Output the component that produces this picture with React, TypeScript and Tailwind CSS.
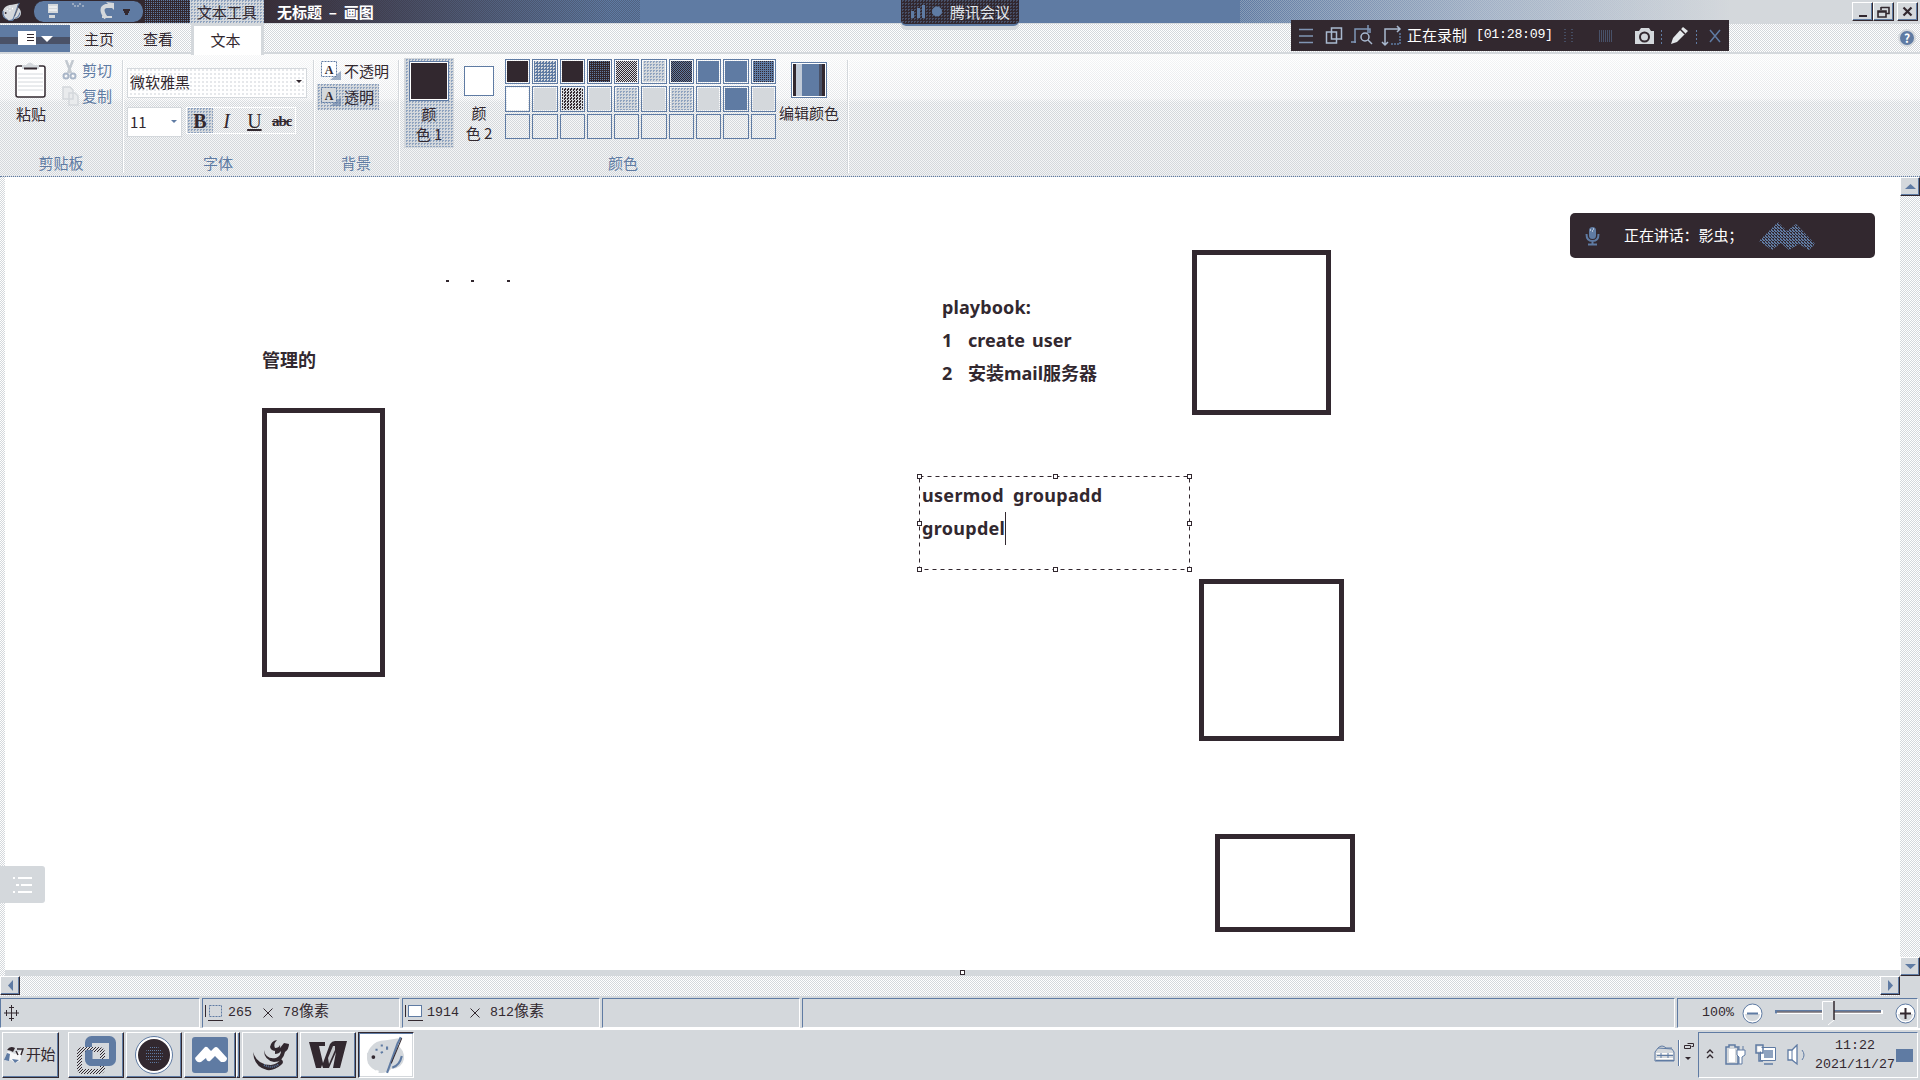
import React from "react";

const UI = "font-['Noto_Sans_CJK_SC','Noto_Sans',sans-serif]";
const MONO = "font-['Liberation_Mono','Noto_Sans_CJK_SC',monospace]";

/* one-pixel dither fills */
const GRAY_HALF = "bg-[repeating-conic-gradient(#ffffff_0_25%,#d4d8dc_0_50%)] bg-[length:2px_2px]";
const GRAY_LIGHT = "bg-[conic-gradient(#e6e8eb_0_25%,#ffffff_0)] bg-[length:4px_4px]";
const GRAY_BLUE = "bg-[conic-gradient(#8fa3bf_0_25%,#d4d8dc_0)] bg-[length:3px_3px]";
const DARK_DOTS = "bg-[conic-gradient(#5f7ba3_0_25%,#32282f_0)] bg-[length:2px_2px]";
const DARK_HALF = "bg-[repeating-conic-gradient(#5f7ba3_0_25%,#32282f_0_50%)] bg-[length:2px_2px]";
const BLUE_DARK = "bg-[conic-gradient(#32282f_0_25%,#5f7ba3_0)] bg-[length:2px_2px]";
const BLUE_GRAY = "bg-[conic-gradient(#d4d8dc_0_25%,#5f7ba3_0)] bg-[length:3px_3px]";

const RAISED = "border border-t-white border-l-white border-r-[#32282f] border-b-[#32282f] bg-[#d4d8dc] shadow-[inset_-1px_-1px_0_#5f7ba3]";

function Palette({ w, h, light = false }: { w: number; h: number; light?: boolean }) {
  return (
    <svg width={w} height={h} viewBox="0 0 38 38">
      <path d="M4 12 Q9 5 19 5 L31 3 L29 9 Q37 14 36 23 Q34 32 24 32 Q20 37 12 34 Q1 31 1 22 Q1 16 4 12Z" fill="#d4d8dc" />
      <path d="M2 17 Q1 29 10 33 M12 35 Q19 36 22 32" stroke={light ? "#d4d8dc" : "#5f7ba3"} strokeWidth="2" fill="none" />
      <path d="M9 14h2M14 10h2M14 17l2-1M20 11v3" stroke={light ? "#5f7ba3" : "#ffffff"} strokeWidth="2" />
      <circle cx="7" cy="21" r="1.8" fill="#32282f" />
      <path d="M33 2 L30 8 L20 36" stroke="#5f7ba3" strokeWidth="2" fill="none" />
      <path d="M34 3 L24 27" stroke="#32282f" strokeWidth="1" />
      <path d="M25 31 Q32 29 34 20" stroke="#5f7ba3" strokeWidth="2" fill="none" />
    </svg>
  );
}

function TitleBar() {
  return (
    <div className="flex h-[23px] w-full shrink-0">
      <div className="flex w-[33px] items-center bg-[#32282f] pl-px"><Palette w={22} h={20} /></div>
      <div className="flex w-[111px] items-center bg-[#32282f]">
        <div className="h-[21px] w-[111px] rounded-[10px] border-x border-[#32282f] bg-[#5f7ba3]">
          <svg width="109" height="21" viewBox="1 1 109 21">
            <path d="M15 4h10v9h-10zM16 15h6v3h-6z" fill="#d4d8dc" />
            <path d="M16 7h8M16 10h8" stroke="#fff" />
            <path d="M39 4h2M41 6h2M44 6h2M46 4h2M49 6h2" stroke="#d4d8dc" />
            <path d="M73 18q-7-10 0-12h6" stroke="#d4d8dc" strokeWidth="4" fill="none" />
            <path d="M73 2l8 8V3zM69 16h10v2H69z" fill="#d4d8dc" />
            <path d="M90 10h7M91 12h5M92 14h3" stroke="#32282f" strokeWidth="2" />
          </svg>
        </div>
      </div>
      <div className={"w-[46px] " + DARK_DOTS} />
      <div className={"relative flex h-6 w-[74px] items-center justify-center " + GRAY_BLUE}>
        <span className="text-[15px] leading-6 text-[#32282f]">文本工具</span>
      </div>
      <div className="flex w-[376px] items-center whitespace-pre bg-[repeating-conic-gradient(rgba(50,40,47,.3)_0_25%,transparent_0_50%),linear-gradient(90deg,#392f3a,#5f7ba3_92%)] bg-[length:2px_2px,100%_100%] pl-[13px] text-[15px] font-bold leading-[22px] text-white">无标题  –  画图</div>
      <div className="w-[600px] bg-[#5f7ba3]" />
      <div className="w-[490px] bg-[repeating-conic-gradient(rgba(212,216,220,.35)_0_25%,transparent_0_50%),linear-gradient(90deg,#5f7ba3,#a0b0c6_50%,#d4d8dc)] bg-[length:2px_2px,100%_100%]" />
      <div className="flex flex-1 items-center justify-end bg-[#d4d8dc] pr-[2px]">
        <div className={"flex h-[19px] w-[21px] items-end justify-center pb-[3px] " + RAISED}><div className="h-[2px] w-2 bg-[#32282f]" /></div>
        <div className={"flex h-[19px] w-[21px] items-center justify-center " + RAISED}>
          <svg width="13" height="12"><path d="M4 1.5h8v6h-3M4 1v3M1 5h8v6h-8zM1 6h8" fill="none" stroke="#32282f" strokeWidth="1.6" /></svg>
        </div>
        <div className={"ml-[3px] flex h-[19px] w-[21px] items-center justify-center " + RAISED}>
          <svg width="11" height="11"><path d="M1.500 1.500l8 8M9.500 1.500l-8 8" stroke="#32282f" strokeWidth="2.200" /></svg>
        </div>
      </div>
    </div>
  );
}

function TabRow() {
  return (
    <div className={"flex h-[31px] w-full shrink-0 border-b-2 border-t border-[#d4d8dc] text-[15px] leading-[30px] text-[#32282f] " + GRAY_HALF}>
      <div className="mt-px flex h-[27px] w-[70px] items-center bg-[linear-gradient(#5f7ba3_45%,#4a5268_45%,#4a5268_70%,#5f7ba3_70%)] pl-[18px]">
        <svg width="36" height="16"><path d="M0 0h18v14H0z" fill="#fff" /><path d="M9 3.500h7M9 6.500h7M9 9.500h7" stroke="#32282f" /><path d="M23 5h12l-6 6z" fill="#fff" /></svg>
      </div>
      <div className="w-[58px] text-center">主页</div>
      <div className="w-[60px] text-center">查看</div>
      <div className="relative z-10 -mb-[3px] ml-[3px] w-[73px] border-x-[3px] border-t-2 border-[#d4d8dc] bg-white text-center leading-[27px]"><span className="-ml-[4px]">文本</span></div>
      <div className="flex flex-1 items-center justify-end pr-[4px]">
        <div className="flex h-[18px] w-[18px] items-center justify-center rounded-full border-2 border-[#d4d8dc] bg-[#5f7ba3] text-[12px] font-bold text-white">?</div>
      </div>
    </div>
  );
}

function Group({ w, label, children }: { w: string; label: string; children: React.ReactNode }) {
  return (
    <div className={"flex h-[113px] flex-col justify-between border-r border-[#d4d8dc] shadow-[1px_0_0_#fff] " + w}>
      <div className="flex h-[92px]">{children}</div>
      <div className="pb-px text-center text-[15px] leading-[18px] text-[#5f7ba3]">{label}</div>
    </div>
  );
}

function TextBg({ label, active = false }: { label: string; active?: boolean }) {
  return (
    <div className={"flex h-[26px] items-center pl-1 " + (active ? "w-[62px] " + GRAY_BLUE : "w-[76px]")}>
      <svg width="20" height="20" className="mr-[3px] shrink-0">
        <path d="M9 19h11v-9z" fill="#5f7ba3" opacity=".6" />
        <rect x=".5" y=".5" width="15" height="15" fill={active ? "#d4d8dc" : "#fff"} stroke="#5f7ba3" strokeDasharray="2 1" />
        <text x="8" y="12.500" fontSize="12" fontFamily="Liberation Serif" fontWeight="bold" textAnchor="middle" fill="#32282f">A</text>
      </svg>
      <span className="whitespace-nowrap">{label}</span>
    </div>
  );
}

const SWATCHES = [
  "bg-[#32282f]", BLUE_GRAY, "bg-[#32282f]", DARK_DOTS, "bg-[repeating-conic-gradient(#d4d8dc_0_25%,#32282f_0_50%)] bg-[length:2px_2px]",
  GRAY_BLUE, DARK_HALF, "bg-[#5f7ba3]", "bg-[#5f7ba3]", BLUE_DARK,
  "bg-white", "bg-[#d4d8dc]", "bg-[repeating-conic-gradient(#d4d8dc_0_25%,#32282f_0_50%)] bg-[length:3px_3px]", "bg-[#d4d8dc]", GRAY_BLUE,
  "bg-[#d4d8dc]", GRAY_BLUE, "bg-[#d4d8dc]", "bg-[#5f7ba3]", "bg-[#d4d8dc]",
];

function Ribbon() {
  return (
    <div className={"flex h-[123px] w-full shrink-0 flex-col border-b border-dotted border-[#5f7ba3] " + GRAY_HALF}>
      <div className="h-[122px] bg-[linear-gradient(rgba(255,255,255,.75),rgba(255,255,255,.4)_36%,rgba(212,216,220,.15)_40%,rgba(212,216,220,.3))]">
        <div className="flex pt-[6px] text-[15px] leading-[20px] text-[#32282f]">
          <Group w="w-[123px]" label="剪贴板">
            <div className="flex w-[62px] flex-col items-center pt-[1px]">
              <svg width="32" height="38">
                <rect x="1" y="5" width="29" height="31" rx="2" fill="#fff" stroke="#32282f" strokeWidth="1.500" />
                <path d="M3 13h25M3 17h25M3 21h25M3 25h25M3 29h25" stroke="#d4d8dc" />
                <path d="M7 4h4q4-5 8 0h5v4h-17z" fill="#d4d8dc" /><path d="M9 7.500h13" stroke="#32282f" strokeWidth="2" />
              </svg>
              <span className="mt-[5px]">粘贴</span>
            </div>
            <div className="flex flex-col gap-[6px] text-[#5f7ba3]">
              <div className="flex items-center gap-[5px]">
                <svg width="15" height="20"><path d="M4 0l5 13M11 0L6 13" stroke="#c3c9d0" strokeWidth="2.500" /><circle cx="4" cy="16" r="2.500" fill="none" stroke="#a9b6c8" strokeWidth="2" /><circle cx="11" cy="16" r="2.500" fill="none" stroke="#a9b6c8" strokeWidth="2" /></svg>
                剪切
              </div>
              <div className="flex items-center gap-[3px]">
                <svg width="17" height="20"><path d="M1 1h7l3 3v9H1zM7 7h6l3 3v9H7z" fill="#e9ebed" stroke="#d4d8dc" strokeWidth="1.500" /></svg>
                复制
              </div>
            </div>
          </Group>
          <Group w="w-[191px]" label="字体">
            <div className="flex flex-col pl-[4px] pt-[8px]">
              <div className={"flex h-[30px] w-[180px] items-center justify-between border border-[#d4d8dc] pb-[3px] pl-[2px] pr-[4px] " + GRAY_LIGHT}>
                微软雅黑<svg width="6" height="4"><path d="M0 0h6l-3 3z" fill="#32282f" /></svg>
              </div>
              <div className="mt-[9px] flex items-start">
                <div className="flex h-[30px] w-[55px] items-center justify-between border border-[#d4d8dc] bg-white pb-px pl-[2px] pr-[4px]">
                  11<svg width="6" height="4"><path d="M0 0h6l-3 3z" fill="#5f7ba3" /></svg>
                </div>
                <div className="ml-[4px] flex h-[27px] w-[110px] border border-white font-['Liberation_Serif',serif] text-[20px] leading-[26px]">
                  <div className={"w-[26px] text-center font-bold " + GRAY_BLUE}>B</div>
                  <div className="w-[28px] text-center italic">I</div>
                  <div className="w-[28px] text-center underline">U</div>
                  <div className="w-[27px] text-center text-[15px] font-bold tracking-[-1px] line-through">abc</div>
                </div>
              </div>
            </div>
          </Group>
          <Group w="w-[85px]" label="背景">
            <div className="-mt-[2px] flex flex-col pl-[3px]">
              <TextBg label="不透明" />
              <TextBg label="透明" active />
            </div>
          </Group>
          <Group w="w-[449px]" label="颜色">
            <div className={"-mt-[2px] ml-[5px] flex h-[90px] w-[50px] shrink-0 flex-col items-center border border-[#d4d8dc] pt-[3px] text-center " + GRAY_BLUE}>
              <div className="h-[38px] w-[38px] shrink-0 border border-white bg-[#32282f] outline outline-[#5f7ba3]" />
              <span className="mt-[4px] whitespace-pre leading-[20px]">颜{"\n"}色 1</span>
            </div>
            <div className="flex w-[50px] shrink-0 flex-col items-center pt-[6px]">
              <div className="h-[30px] w-[30px] shrink-0 border border-[#5f7ba3] bg-white" />
              <span className="mt-[7px] whitespace-pre text-center leading-[20px]">颜{"\n"}色 2</span>
            </div>
            <div className="-mt-px ml-px grid h-[80px] w-[271px] shrink-0 grid-cols-10 grid-rows-3 gap-[2px]">
              {Array.from({ length: 30 }, (_, i) => (
                <div key={i} className="border border-[#5f7ba3] p-px">
                  <div className={"h-full w-full " + (SWATCHES[i] ?? "")} />
                </div>
              ))}
            </div>
            <div className="flex w-[66px] shrink-0 flex-col items-center pt-[2px]">
              <svg width="37" height="37">
                <rect x=".5" y=".5" width="35" height="35" fill="#fff" stroke="#5f7ba3" />
                <path d="M2 2h3v32h-3zM31 2h3v32h-3z" fill="#32282f" /><path d="M28 2h3v32h-3z" fill="#4a5268" />
                <path d="M5 2h7v32h-7z" fill="#c0cad8" /><path d="M11 2h17v32h-17z" fill="#5f7ba3" />
              </svg>
              <span className="mt-[4px] whitespace-nowrap">编辑颜色</span>
            </div>
          </Group>
        </div>
      </div>
    </div>
  );
}

const BOXES = [
  "left-[257px] top-[231px] w-[123px] h-[269px]",
  "left-[1187px] top-[73px] w-[139px] h-[165px]",
  "left-[1194px] top-[402px] w-[145px] h-[162px]",
  "left-[1210px] top-[657px] w-[140px] h-[98px]",
];

const HANDLES = [
  "left-[-2px] top-[-2px]", "left-[134px] top-[-2px]", "left-[268px] top-[-2px]",
  "left-[-2px] top-[45px]", "left-[268px] top-[45px]",
  "left-[-2px] top-[91px]", "left-[134px] top-[91px]", "left-[268px] top-[91px]",
];

function Canvas() {
  return (
    <div className="relative h-[793px] w-[1895px] bg-white font-['Noto_Sans','Noto_Sans_CJK_SC',sans-serif] text-[18px] font-bold leading-[33px] text-[#32282f]">
      {BOXES.map((b) => <div key={b} className={"absolute border-[5px] border-[#32282f] " + b} />)}
      <div className="absolute left-[441px] top-[103px] h-[2px] w-[3px] bg-[#32282f]" />
      <div className="absolute left-[466px] top-[103px] h-[2px] w-[3px] bg-[#32282f]" />
      <div className="absolute left-[502px] top-[103px] h-[2px] w-[3px] bg-[#32282f]" />
      <div className="absolute left-[257px] top-[167px] whitespace-nowrap">管理的</div>
      <div className="absolute left-[937px] top-[114px] whitespace-pre">
        <div className="tracking-[0.1px]">playbook:</div>
        <div className="flex"><span className="w-[26px]">1</span><span className="w-[64px]">create</span><span>user</span></div>
        <div className="flex"><span className="w-[26px]">2</span><span>安装mail服务器</span></div>
      </div>
      <div className="absolute left-[914px] top-[299px] h-[94px] w-[271px]">
        <svg className="absolute inset-0" width="271" height="94"><rect x=".5" y=".5" width="270" height="93" fill="none" stroke="#32282f" strokeDasharray="4 4" /></svg>
        <div className="absolute left-[3px] top-[3px] flex whitespace-pre tracking-[0.3px]"><span className="w-[91px]">usermod</span><span>groupadd</span></div>
        <div className="absolute left-[3px] top-[36px] tracking-[0.3px]">groupdel</div>
        <div className="absolute left-[86px] top-[36px] h-[33px] w-px bg-[#32282f]" />
        {HANDLES.map((h) => <div key={h} className={"absolute h-[5px] w-[5px] border border-[#32282f] bg-white " + h} />)}
      </div>
      <div className="absolute left-[-5px] top-[689px] flex h-[37px] w-[45px] items-center rounded-r-[3px] bg-[#d4d8dc] pl-[13px]">
        <svg width="20" height="18"><path d="M0 2h2M5 2h14M3 9h3M8 9h11M0 16h2M5 16h14" stroke="#fff" strokeWidth="2" /></svg>
      </div>
      <div className={"absolute left-[1565px] top-[36px] flex h-[45px] w-[305px] items-center rounded-[5px] bg-[#32282f] font-normal text-white " + UI}>
        <svg className="ml-[15px]" width="15" height="20"><rect x="4" y="1" width="7" height="12" rx="3.500" fill="#5f7ba3" /><path d="M1.500 8q0 7 6 7t6-7M7.500 15v3M3 18.500h9" fill="none" stroke="#5f7ba3" strokeWidth="2" /><path d="M5 4h1M8 3h1M7 5h1" stroke="#fff" /></svg>
        <span className="-mt-[2px] ml-[24px] w-[135px] whitespace-pre text-[15px] tracking-[-0.1px]">正在讲话：影虫；</span>
        <svg width="58" height="30">
          <defs><pattern id="dots" width="3" height="3" patternUnits="userSpaceOnUse"><path d="M0 0h2v1h-2zM1 1h2v1h-2zM0 2h1v1h-1z" fill="#5f7ba3" /></pattern></defs>
          <path d="M0 20L19 1l9 9 9-7 19 20-6 6-10-6-10 6-8-7-9 7z" fill="url(#dots)" />
        </svg>
      </div>
      <div className="absolute left-[955px] top-[793px] h-[5px] w-[5px] border border-[#32282f] bg-white" />
    </div>
  );
}

function ScrollButton({ d, size = "h-[19px] w-[20px]" }: { d: string; size?: string }) {
  return (
    <div className={"flex shrink-0 items-center justify-center " + size + " " + RAISED}>
      <svg width="11" height="11"><path d={d} fill="#5f7ba3" /></svg>
    </div>
  );
}

function Pane({ w, children }: { w: string; children?: React.ReactNode }) {
  return <div className={"flex h-[30px] shrink-0 items-center border border-t-[#5f7ba3] border-l-[#5f7ba3] border-b-white border-r-white whitespace-pre " + w}>{children}</div>;
}

function StatusBar() {
  return (
    <div className={"flex h-[32px] w-full shrink-0 gap-[2px] bg-[#d4d8dc] pt-[2px] text-[13.3px] text-[#32282f] " + MONO}>
      <Pane w="w-[200px]"><svg className="ml-[2px]" width="17" height="18"><path d="M8.500 1v16M1 9h15M6 3.500h5M6 14.500h5M3.500 6v6M13.500 6v6" stroke="#32282f" fill="none" /></svg></Pane>
      <Pane w="w-[198px]">
        <svg className="ml-[1px]" width="20" height="18"><path d="M1.500 1v12M4 16.500h15" stroke="#32282f" /><rect x="5.500" y="1.500" width="12" height="11" fill="none" stroke="#5f7ba3" strokeDasharray="2 1" /></svg>
        <span className="ml-[4px] w-[34px]">265</span><Times /><span className="ml-[9px]">78<span className="text-[15px]">像素</span></span>
      </Pane>
      <Pane w="w-[198px]">
        <svg className="ml-[1px]" width="20" height="18"><path d="M1.500 1v12M4 16.500h15" stroke="#32282f" /><rect x="4.500" y="1.500" width="13" height="11" fill="#fff" stroke="#5f7ba3" /></svg>
        <span className="ml-[3px] w-[42px]">1914</span><Times /><span className="ml-[9px]">812<span className="text-[15px]">像素</span></span>
      </Pane>
      <Pane w="w-[198px]" />
      <Pane w="w-[873px]" />
      <Pane w="w-[241px]">
        <span className="ml-[24px] w-[31px]">100%</span>
        <Round plus={false} />
        <svg className="ml-[12px] mr-[12px]" width="108" height="26">
          <path d="M0 10h108v4H0z" fill="#fff" /><path d="M0 10h106v1.500H2v2H0z" fill="#5f7ba3" /><path d="M2 12h104" stroke="#32282f" />
          <path d="M47 1h12v19l-6 5-6-5z" fill="#d4d8dc" /><path d="M47.500 20V1.500h11" stroke="#fff" fill="none" /><path d="M59 1v19" stroke="#32282f" fill="none" strokeWidth="1.500" /><path d="M59 20l-6 5" stroke="#fff" />
        </svg>
        <Round plus />
      </Pane>
    </div>
  );
}

function Times() {
  return <svg width="12" height="12"><path d="M1.500 1.500l9 9M10.500 1.500l-9 9" stroke="#32282f" /></svg>;
}

function Round({ plus }: { plus: boolean }) {
  return (
    <svg className={plus ? "ml-0" : "ml-[9px]"} width="21" height="21">
      <circle cx="10.500" cy="10.500" r="9.500" fill="#fff" stroke="#5f7ba3" />
      <path d="M3 11h15q-1 7-7.500 7T3 11" fill="#d4d8dc" />
      <path d={plus ? "M5 10.500h11M10.500 5v11" : "M5 10.500h11"} stroke={plus ? "#32282f" : "#5f7ba3"} strokeWidth="2" />
    </svg>
  );
}

function Task({ children }: { children: React.ReactNode }) {
  return <div className={"flex h-[46px] w-[56px] shrink-0 items-center justify-center " + RAISED}>{children}</div>;
}

function Taskbar() {
  return (
    <div className="flex h-[52px] w-full shrink-0 border-t-2 border-white bg-[#d4d8dc] pl-[2px] pt-[2px] text-[#32282f]">
      <div className={"mr-[9px] flex h-[46px] w-[57px] items-center pl-px " + RAISED}>
        <svg className="shrink-0" width="20" height="20"><path d="M1 12l3-6 7 3 7-4-2 11-5 2-4-3-6 1z" fill="#fff" opacity=".8" /><path d="M3 5q3-5 8-2l-2 4q-3-2-6-2z" fill="#32282f" /><path d="M13 4h6l-2 6M12 6l2 4" stroke="#32282f" fill="none" strokeWidth="1.500" /><path d="M0 15l3-7 3 1-1 7zM8 14l3 4 4-3" fill="#5f7ba3" /></svg>
        <span className="-mt-[2px] whitespace-nowrap pl-[2px] text-[15px] tracking-[-0.5px]">开始</span>
      </div>
      <div className="flex gap-[2px]">
        <Task>
          <svg width="42" height="42">
            <defs><pattern id="dk" width="3" height="3" patternUnits="userSpaceOnUse"><path d="M0 0h1v1h-1zM2 1h1v1h-1zM1 2h1v1h-1z" fill="#32282f" /></pattern></defs>
            <rect x="13.500" y="5.500" width="24" height="23" rx="3" fill="none" stroke="#5f7ba3" strokeWidth="7" />
            <rect x="4.500" y="15.500" width="23" height="22" rx="3" fill="none" stroke="#d4d8dc" strokeWidth="5" />
            <rect x="4.500" y="15.500" width="23" height="22" rx="3" fill="none" stroke="url(#dk)" strokeWidth="5" />
            <path d="M14 16v9q0 3.500 3 3.500h15" fill="none" stroke="#5f7ba3" strokeWidth="7" />
          </svg>
        </Task>
        <Task>
          <svg width="40" height="40">
            <defs><pattern id="bl" width="2" height="3" patternUnits="userSpaceOnUse"><path d="M0 0h1v1h-1z" fill="#5f7ba3" /></pattern></defs>
            <circle cx="20" cy="20" r="18.500" fill="#fff" stroke="#5f7ba3" /><circle cx="20" cy="20" r="16" fill="#32282f" /><circle cx="20" cy="20" r="9" fill="url(#bl)" />
          </svg>
        </Task>
        <div className="flex w-[56px]">
          <div className={"flex h-[46px] w-[52px] items-center justify-center " + RAISED}>
            <svg width="38" height="38"><rect x="1" y="1" width="36" height="36" rx="3" fill="#5f7ba3" /><path d="M4 22l10-11q2-1 4 2l2 2 3-3q2-2 4 0l9 10q0 3-3 4h-3l-6-6-5 5q-3 1-4-3l-5 4q-5 1-6-4z" fill="#fff" /></svg>
          </div>
          <div className={"h-[46px] w-[4px] " + RAISED} />
        </div>
        <Task>
          <svg width="40" height="40"><path d="M3 17q4 13 18 13 7-1 10-6 4 3 0 6-7 6-14 5Q4 32 3 17zM14 15q2 10 12 8 5-2 5-7-2 3-6 3v-3l5-3 4-5 5 1q0 5-4 8-2 10-11 10-10-2-10-12zM20 12q1-6 7-7-4 4-2 8 4 0 5-3 1 4-4 6-5 0-6-4z" fill="#32282f" /><path d="M14 30q8 4 15-1" stroke="#5f7ba3" strokeDasharray="1 1" fill="none" strokeWidth="2" /></svg>
        </Task>
        <Task>
          <svg width="42" height="34">
            <path d="M2 4h16v4h-6l4 17 7-19q2-3 5-3h12l-7 27h-7l3-16-7 16h-6l-1-3-1 3H9z" fill="#32282f" />
            <path d="M26 8l-5 12 1 6 6-14v-4z" fill="#d4d8dc" opacity=".9" />
          </svg>
        </Task>
        <div className="flex h-[46px] w-[56px] items-center justify-center border border-b-white border-l-[#32282f] border-r-white border-t-[#32282f] bg-white shadow-[inset_1px_1px_0_#5f7ba3,inset_-1px_-1px_0_#d4d8dc]"><Palette w={42} h={40} light /></div>
      </div>
      <div className="flex flex-1 justify-end pr-[2px]">
        <svg className="mt-[11px]" width="22" height="20"><path d="M1 9l3-4 14 1 2 3v9H1z" fill="#d4d8dc" stroke="#5f7ba3" /><path d="M4 5q4-4 8 0h6" fill="none" stroke="#5f7ba3" /><path d="M2 10.500h17M2 15.500h17" stroke="#fff" /><path d="M3 12.500h16M2 17.500h18M7 10v5M14 10v5" stroke="#5f7ba3" /></svg>
        <div className="mx-[2px] mt-[8px] h-[26px] w-[2px] border-l border-r border-l-[#5f7ba3] border-r-white" />
        <svg className="mr-[3px] mt-[10px]" width="13" height="24"><path d="M5.500 1.500h6v3h-2M2.500 3.500h6v3h-6z" fill="none" stroke="#32282f" /><path d="M3 15h6l-3 3z" fill="#32282f" /></svg>
        <div className={"flex h-[46px] w-[220px] items-center border border-b-white border-l-[#5f7ba3] border-r-white border-t-[#5f7ba3] " + MONO}>
          <svg className="ml-[7px] -mt-[2px]" width="8" height="12"><path d="M1 5l3-3 3 3M1 10l3-3 3 3" fill="none" stroke="#32282f" strokeWidth="1.400" /></svg>
          <svg className="ml-[11px]" width="22" height="22"><path d="M1 3h3V1h6v2h3v17H1z" fill="#d4d8dc" stroke="#5f7ba3" strokeWidth="1.500" /><path d="M4 5h6v13H4z" fill="#fff" /><path d="M12 6h8v5l-3 2v7h-3v-7l-2-2zM14 2v4M18 2v4" fill="#fff" stroke="#5f7ba3" /></svg>
          <svg className="ml-[8px]" width="22" height="22"><path d="M5.500 3.500h15v13h-15z" fill="#fff" stroke="#5f7ba3" /><path d="M9 6h9v8H9z" fill="#8fa3bf" /><path d="M9 20h9M1 1h7v8H1zM4 9v8h4" fill="none" stroke="#5f7ba3" strokeWidth="1.500" /><path d="M2.500 2.500h4v5h-4z" fill="#fff" /></svg>
          <svg className="ml-[10px]" width="20" height="22"><path d="M1 6h4l5-5v19l-5-4H1z" fill="#fff" stroke="#5f7ba3" strokeWidth="1.300" /><path d="M5 6v10" stroke="#5f7ba3" /><path d="M15 6q4 5 0 10" fill="none" stroke="#5f7ba3" /></svg>
          <div className="ml-[8px] flex w-[80px] flex-col items-center text-[13.3px] leading-[19px]"><span>11:22</span><span>2021/11/27</span></div>
          <div className="ml-[1px] h-[13px] w-[17px] bg-[#5f7ba3]" />
        </div>
      </div>
    </div>
  );
}

function MeetingPill() {
  return (
    <div className="absolute left-[901px] top-0 flex h-[26px] w-[118px] items-center rounded-b-[5px] border-b-2 border-[#5f7ba3] bg-[conic-gradient(#475068_0_25%,#32282f_0)] bg-[length:3px_3px] pl-[9px] shadow-[0_4px_0_#d4d8dc]">
      <svg width="32" height="14"><path d="M1 6h3v7H1zM7 3h3v10H7zM12 0h3v13h-3z" fill="#5f7ba3" /><circle cx="27" cy="6.500" r="5" fill="#5f7ba3" /></svg>
      <span className="ml-[8px] whitespace-nowrap text-[15px] leading-6 text-[#e4e7ea]">腾讯会议</span>
    </div>
  );
}

function RecordingBar() {
  return (
    <div className="absolute left-[1291px] top-[20px] flex h-[31px] w-[438px] items-center bg-[#32282f] text-white">
      <svg className="ml-[8px] shrink-0" width="108" height="24" fill="none" stroke="#a9b9d0" strokeWidth="1.500">
        <path d="M0 5.500h14M0 12h14M0 18.500h14" stroke="#8095b4" />
        <path d="M27.500 8h10v11h-10zM32.500 4h10v11h-10z" />
        <path d="M57 18h-5M56 19V5h15v4M69 1v8" stroke="#7f96b8" /><circle cx="66" cy="13" r="4" /><path d="M69 16l4 4" />
        <path d="M86 20V5h14M83 18l3 3 3-3M98 2l3 3-3 3" /><path d="M92 20h9V9" stroke="#5f7ba3" strokeDasharray="2 1" />
      </svg>
      <span className="-mt-[2px] w-[69px] shrink-0 whitespace-nowrap text-[15px] leading-[30px]">正在录制</span>
      <span className={"-mt-[2px] w-[80px] shrink-0 text-[13.3px] leading-[30px] tracking-[-0.3px] " + MONO}>[01:28:09]</span>
      <svg className="shrink-0" width="165" height="24" fill="none" stroke="#5f7ba3" strokeWidth="1.500">
        <path d="M9 5v15M16 5v15" strokeDasharray="1 2" opacity=".6" />
        <path d="M43 7h13M43 9h13M43 11h13M43 13h13M43 15h13M43 17h13" strokeDasharray="1 1" strokeWidth="1" />
        <path d="M79 7h4l2-3h8l2 3h3v13H79z" fill="#d4d8dc" stroke="none" /><circle cx="88.500" cy="13" r="4.500" stroke="#32282f" strokeWidth="2" />
        <path d="M105.500 6v14M140.500 6v14" strokeDasharray="2 2" strokeWidth="1" />
        <path d="M115 20l2-6L127 3l5 4-11 11z" fill="#e4e7ea" stroke="none" /><path d="M124 5l5 5" stroke="#32282f" />
        <path d="M154 6l10 12M164 6l-10 12" />
      </svg>
    </div>
  );
}

export default function App() {
  return (
    <div className={"relative flex h-[1080px] w-[1920px] flex-col overflow-hidden bg-[#d4d8dc] " + UI}>
      <TitleBar />
      <TabRow />
      <Ribbon />
      <div className="flex h-[799px] shrink-0">
        <div className={"w-[5px] " + GRAY_HALF} />
        <div className="w-[1895px]"><Canvas /></div>
        <div className={"flex w-[20px] flex-col justify-between " + GRAY_HALF}>
          <ScrollButton d="M0 8h11l-5.500-5z" />
          <ScrollButton d="M0 3h11l-5.500 5z" />
        </div>
      </div>
      <div className="flex h-[20px] shrink-0">
        <div className={"flex w-[1900px] justify-between " + GRAY_HALF}>
          <ScrollButton d="M8 0v11l-5-5.500z" />
          <ScrollButton d="M3 0v11l5-5.500z" />
        </div>
      </div>
      <StatusBar />
      <Taskbar />
      <MeetingPill />
      <RecordingBar />
    </div>
  );
}
